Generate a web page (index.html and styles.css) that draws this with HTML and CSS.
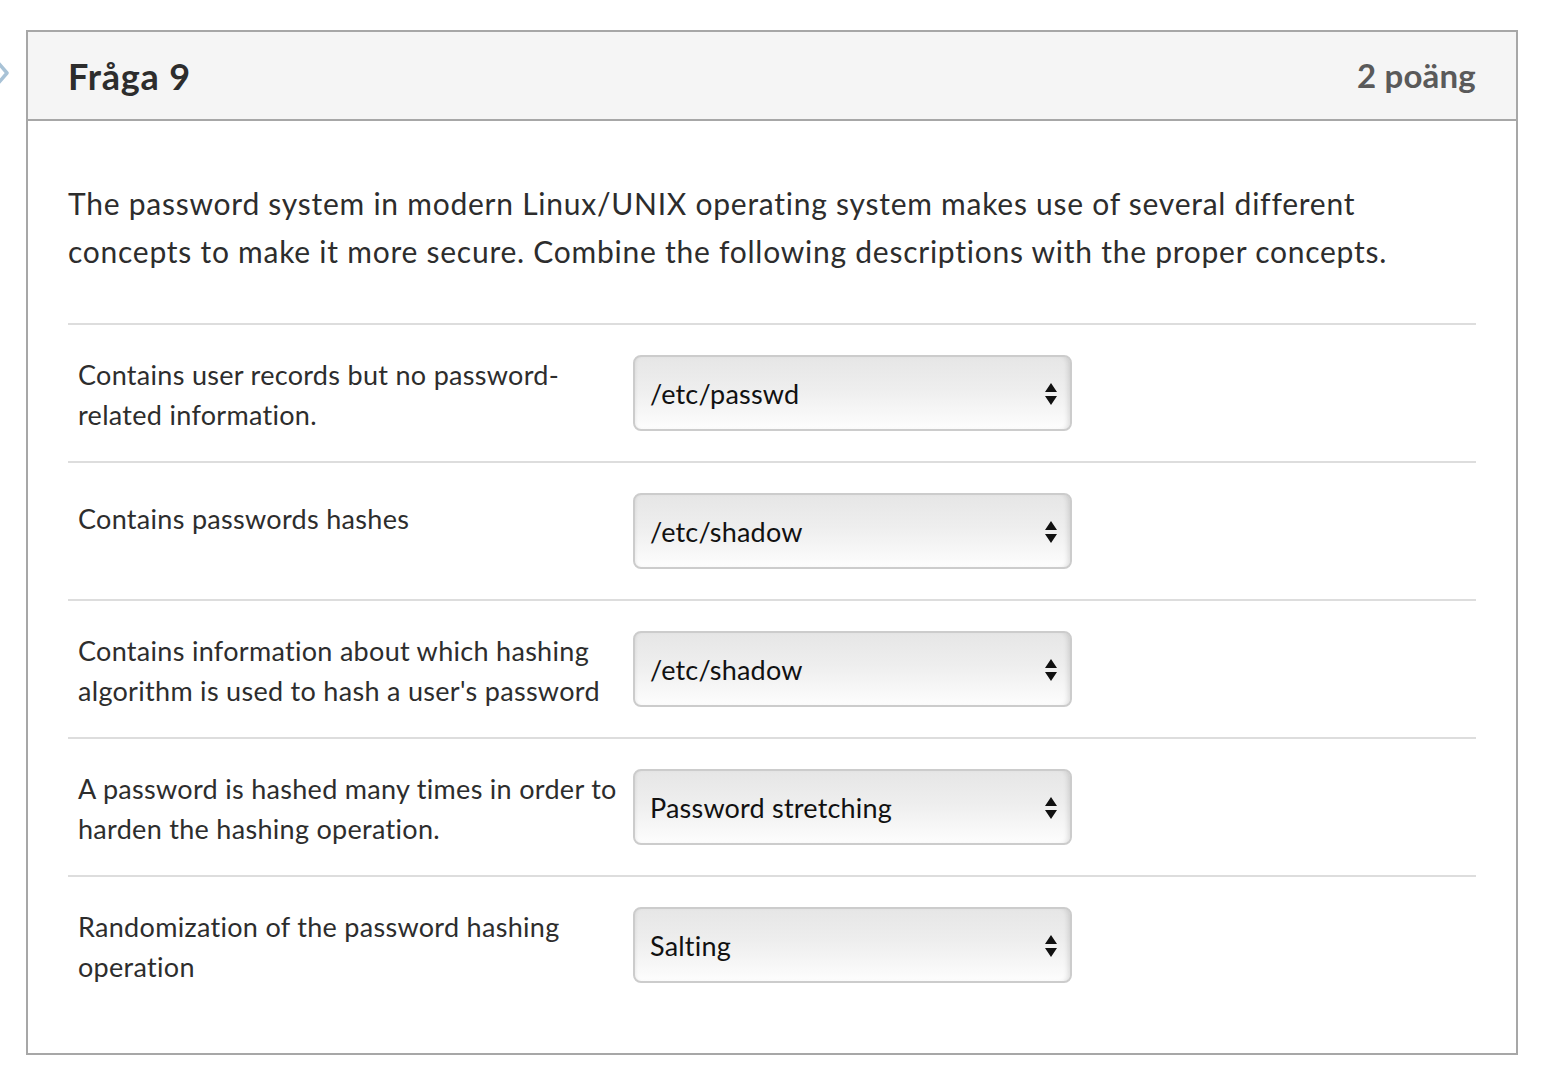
FILE: index.html
```html
<!DOCTYPE html>
<html lang="sv">
<head>
<meta charset="utf-8">
<title>Fråga 9</title>
<link rel="stylesheet" href="styles.css">
</head>
<body>
<svg class="nav-chevron" width="20" height="34" viewBox="0 0 20 34" aria-hidden="true">
  <path d="M0 3 L12 17 L0 31" fill="none" stroke="#a8c2d6" stroke-width="3.5" stroke-linejoin="round" stroke-linecap="round"/>
</svg>
<div class="question">
  <div class="question-header">
    <h2 class="question-title">Fråga 9</h2>
    <span class="question-points">2 poäng</span>
  </div>
  <div class="question-body">
    <p class="question-text">The password system in modern Linux/UNIX operating system makes use of several different concepts to make it more secure. Combine the following descriptions with the proper concepts.</p>
    <div class="answers">
      <div class="answer">
        <div class="answer-label">Contains user records but no password-related information.</div>
        <div class="select"><span class="select-value">/etc/passwd</span><svg class="select-arrows" width="12" height="22" viewBox="0 0 12 22"><path d="M6 0 L12 9 L0 9 Z M0 13 L12 13 L6 22 Z" fill="#111"/></svg></div>
      </div>
      <div class="answer">
        <div class="answer-label answer-label--single">Contains passwords hashes</div>
        <div class="select"><span class="select-value">/etc/shadow</span><svg class="select-arrows" width="12" height="22" viewBox="0 0 12 22"><path d="M6 0 L12 9 L0 9 Z M0 13 L12 13 L6 22 Z" fill="#111"/></svg></div>
      </div>
      <div class="answer">
        <div class="answer-label">Contains information about which hashing algorithm is used to hash a user's password</div>
        <div class="select"><span class="select-value">/etc/shadow</span><svg class="select-arrows" width="12" height="22" viewBox="0 0 12 22"><path d="M6 0 L12 9 L0 9 Z M0 13 L12 13 L6 22 Z" fill="#111"/></svg></div>
      </div>
      <div class="answer">
        <div class="answer-label">A password is hashed many times in order to harden the hashing operation.</div>
        <div class="select"><span class="select-value">Password stretching</span><svg class="select-arrows" width="12" height="22" viewBox="0 0 12 22"><path d="M6 0 L12 9 L0 9 Z M0 13 L12 13 L6 22 Z" fill="#111"/></svg></div>
      </div>
      <div class="answer">
        <div class="answer-label">Randomization of the password hashing operation</div>
        <div class="select"><span class="select-value">Salting</span><svg class="select-arrows" width="12" height="22" viewBox="0 0 12 22"><path d="M6 0 L12 9 L0 9 Z M0 13 L12 13 L6 22 Z" fill="#111"/></svg></div>
      </div>
    </div>
  </div>
</div>
</body>
</html>
```

FILE: styles.css
```css
html, body {
  margin: 0;
  padding: 0;
  background: #fff;
}

body {
  font-family: Lato, "Noto Sans", sans-serif;
  color: #2d3b45;
  position: relative;
  padding: 30px 32px 0 26px;
  height: 1084px;
  box-sizing: border-box;
  overflow: hidden;
}

.nav-chevron {
  position: absolute;
  left: -5px;
  top: 56px;
}

.question {
  width: 1492px;
  border: 2px solid #a7a7a7;
  box-sizing: border-box;
  background: #fff;
}

.question-header {
  display: flex;
  align-items: center;
  justify-content: space-between;
  height: 87px;
  padding: 0 40px;
  background: #f5f5f5;
  border-bottom: 2px solid #a7a7a7;
}

.question-title {
  margin: 0;
  font-size: 36px;
  font-weight: 700;
  letter-spacing: 0.8px;
  color: #2d2d2d;
  line-height: 1;
}

.question-points {
  font-size: 33px;
  font-weight: 700;
  letter-spacing: 0.2px;
  color: #5a5a5a;
  line-height: 1;
}

.question-body {
  padding: 58px 40px 40px;
}

.question-text {
  margin: 0 0 48px;
  font-size: 30px;
  letter-spacing: 0.75px;
  line-height: 48px;
  color: #2d2d2d;
}

.answer {
  display: flex;
  align-items: flex-start;
  border-top: 2px solid #dddddd;
  padding: 30px 0 26px;
  height: 138px;
  box-sizing: border-box;
}

.answer-label {
  width: 565px;
  flex: none;
  box-sizing: border-box;
  padding: 0 10px;
  font-size: 27px;
  letter-spacing: 0.3px;
  line-height: 40px;
  color: #2d2d2d;
}

.answer-label--single {
  padding-top: 6px;
}

.select {
  width: 439px;
  height: 76px;
  box-sizing: border-box;
  display: flex;
  align-items: center;
  justify-content: space-between;
  padding: 0 13px 0 15px;
  border: 2px solid #cccccc;
  border-radius: 8px;
  background: linear-gradient(to bottom, #e6e6e6 0%, #eeeeee 45%, #fdfdfd 100%);
  box-shadow: inset -5px 0 5px -3px rgba(0, 0, 0, 0.12), inset 3px 0 3px -2px rgba(0, 0, 0, 0.06);
}

.select-value {
  font-size: 27px;
  letter-spacing: 0.2px;
  color: #111;
  line-height: 1;
}

.select-arrows {
  display: block;
  margin-top: 2px;
}
```
